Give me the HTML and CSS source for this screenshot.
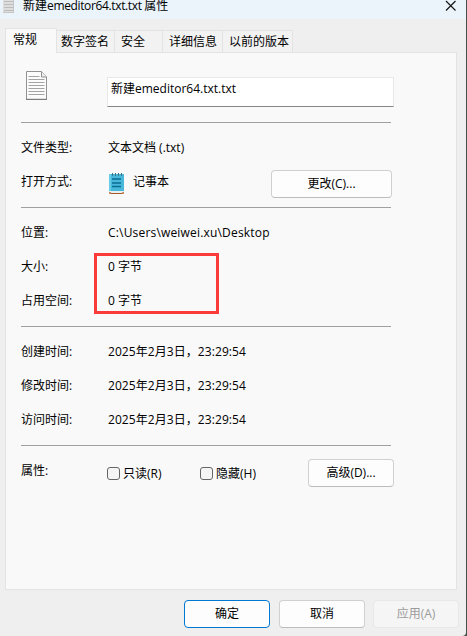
FILE: index.html
```html
<!DOCTYPE html>
<html lang="zh-CN">
<head>
<meta charset="utf-8">
<title>新建emeditor64.txt.txt 属性</title>
<link rel="stylesheet" href="styles.css">
</head>
<body>
<div class="window">
  <header class="titlebar">
    <svg class="title-icon" width="12" height="14" viewBox="0 0 12 14" shape-rendering="crispEdges">
      <path d="M0 0h11v13H0z" fill="#dedede"/>
      <path d="M1 1.5h9M1 4.5h9M1 7.5h9M1 10.5h9" stroke="#bcbcbc"/>
      <path d="M0 12.5h11M10.5 0v13" stroke="#c6c6c6"/>
    </svg>
    <h1 class="title">新建<span class="latin">emeditor64.txt.txt </span>属性</h1>
    <svg class="close" width="12" height="12" viewBox="0 0 12 12"><path d="M1 1l9.500 9.500M10.500 1L1 10.500" fill="none" stroke="#111" stroke-width="1.1"/></svg>
  </header>
  <nav class="tabs">
    <span class="tab active">常规</span>
    <span class="tab signature">数字签名</span>
    <span class="tab security">安全</span>
    <span class="tab details">详细信息</span>
    <span class="tab versions">以前的版本</span>
  </nav>
  <main class="panel">
    <section class="file">
      <svg class="file-icon" width="21" height="29" viewBox="0 0 21 29">
        <path d="M.5.500H15.500L20.500 6V28.500H.5z" fill="#fbfbfb" stroke="#929292"/>
        <path d="M15.500.500V6H20.500" fill="#eee" stroke="#929292"/>
        <path d="M2.500 5.500h11M2.500 8.500h16M2.500 11.500h16M2.500 14.500h16M2.500 17.500h16M2.500 20.500h16M2.500 23.500h16" stroke="#a4a4a4"/>
        <path d="M0 28.300h21" stroke="#777"/>
      </svg>
      <div class="name-field">新建emeditor64.txt.txt</div>
    </section>
    <section class="group">
      <div class="row"><span class="label">文件类型:</span><span class="type">文本文档 (.txt)</span></div>
      <div class="row">
        <span class="label">打开方式:</span>
        <svg class="notepad" width="17" height="22" viewBox="0 0 17 22">
          <path d="M1 17h15v4H1z" fill="#e9eef0"/>
          <path d="M1 20.500h15" stroke="#a4572b"/>
          <path d="M1 19h2v2H1zM14 19h2v2h-2z" fill="#c98a62"/>
          <path d="M1 1h15v17H1z" fill="#48b7d9"/>
          <path d="M1 1h2v17H1z" fill="#66cde6"/>
          <path d="M4.500 0v3M7.500 0v3M10.500 0v3M13.500 0v3" stroke="#3d7488"/>
          <path d="M4 6h9M4 10h9M4 13.500h9" stroke="#096f96" stroke-width="1.3"/>
        </svg>
        <span class="app">记事本</span>
        <button class="btn change">更改(C)...</button>
      </div>
    </section>
    <section class="group">
      <div class="row"><span class="label">位置:</span><span class="path">C:\Users\weiwei.xu\Desktop</span></div>
      <div class="sizes">
        <div class="row"><span class="label">大小:</span><span class="size">0 字节</span></div>
        <div class="row"><span class="label">占用空间:</span><span class="size">0 字节</span></div>
        <div class="highlight"></div>
      </div>
    </section>
    <section class="group">
      <div class="row"><span class="label">创建时间:</span><span class="date">2025年2月3日，23:29:54</span></div>
      <div class="row"><span class="label">修改时间:</span><span class="date">2025年2月3日，23:29:54</span></div>
      <div class="row"><span class="label">访问时间:</span><span class="date">2025年2月3日，23:29:54</span></div>
    </section>
    <section class="group attributes">
      <span class="label">属性:</span>
      <label class="check"><i class="box"></i><span>只读(R)</span></label>
      <label class="check"><i class="box"></i><span>隐藏(H)</span></label>
      <button class="btn advanced">高级(D)...</button>
    </section>
  </main>
  <footer class="actions">
    <button class="btn primary">确定</button>
    <button class="btn">取消</button>
    <button class="btn disabled">应用(A)</button>
  </footer>
</div>
</body>
</html>
```
FILE: styles.css
```css
* { box-sizing: border-box; }
body {
  margin: 0;
  width: 467px;
  height: 636px;
  overflow: hidden;
  background: #46504a;
  color: #000;
  font: 12px/16px "Open Sans", "Noto Sans CJK SC", sans-serif;
  white-space: nowrap;
}
.window {
  width: 466px;
  height: 636px;
  background: #efefef;
  border-bottom-right-radius: 4px;
}
.titlebar {
  display: flex;
  height: 19px;
  background: #ebf4fb;
}
.title-icon { margin: 0 8px 0 3px; }
.title {
  margin: 0;
  flex: 1;
  font-size: 12px;
  font-weight: 400;
  line-height: 12px;
}
.latin { letter-spacing: -0.36px; }
.close { margin-right: 9px; }
.tabs {
  display: flex;
  align-items: flex-end;
  height: 34px;
  padding-left: 5px;
}
.tab {
  height: 23px;
  padding: 3px 0 0 4px;
  border: 1px solid #e3e3e3;
  border-left: 0;
  background: #f2f2f2;
}
.tab.active {
  position: relative;
  width: 52px;
  height: 25px;
  padding: 3px 0 0 7px;
  border: 1px solid #e3e3e3;
  border-bottom: 0;
  background: #f9f9f9;
}
.signature { width: 58px; }
.security { width: 48px; padding-left: 6px; }
.details { width: 60px; padding-left: 6px; }
.versions { width: 70px; padding-left: 6px; }
.panel {
  width: 452px;
  height: 538px;
  margin: -1px 0 0 5px;
  padding-left: 15px;
  border: 1px solid #e3e3e3;
  background: #f9f9f9;
}
.file {
  display: flex;
  height: 69px;
  padding: 18px 0 0 5px;
}
.name-field {
  width: 287px;
  height: 30px;
  margin: 6px 0 0 60px;
  padding: 3px;
  border: 1px solid #e8e8e8;
  border-bottom-color: #868686;
  background: #fff;
}
.group {
  width: 370px;
  padding: 8px 0;
  border-top: 1px solid #a0a0a0;
}
.row {
  display: flex;
  align-items: center;
  height: 34px;
}
.label { width: 87px; flex: none; }
.path { letter-spacing: 0.18px; }
.date { letter-spacing: 0.07px; }
.notepad { margin-top: 4px; }
.app { margin-left: 8px; }
.btn {
  width: 86px;
  height: 28px;
  flex: none;
  padding: 0 0 1px;
  border: 1px solid #d0d0d0;
  border-bottom-color: #bcbcbc;
  border-radius: 4px;
  background: #fdfdfd;
  color: #000;
  font: inherit;
}
.change { width: 121px; margin: 4px -1px 0 auto; }
.sizes { position: relative; }
.highlight {
  position: absolute;
  left: 73px;
  top: 3px;
  width: 125px;
  height: 61px;
  border: 3px solid #fb3a3a;
}
.attributes { display: flex; }
.attributes .label { padding-top: 9px; width: 86px; }
.check {
  display: flex;
  gap: 3px;
  width: 93px;
  flex: none;
  padding-top: 12px;
}
.box {
  width: 13px;
  height: 13px;
  margin-top: 1px;
  border: 1px solid #666;
  border-radius: 3px;
  background: #f5f5f5;
}
.advanced { margin: 5px -3px 0 auto; }
.actions {
  display: flex;
  justify-content: flex-end;
  gap: 9px;
  padding: 10px 7px 0 0;
}
.primary { border-color: #0078d4; }
.disabled {
  margin-left: -1px;
  border-color: #e8e8e8;
  background: #f5f5f5;
  color: #9b9b9b;
}
```
